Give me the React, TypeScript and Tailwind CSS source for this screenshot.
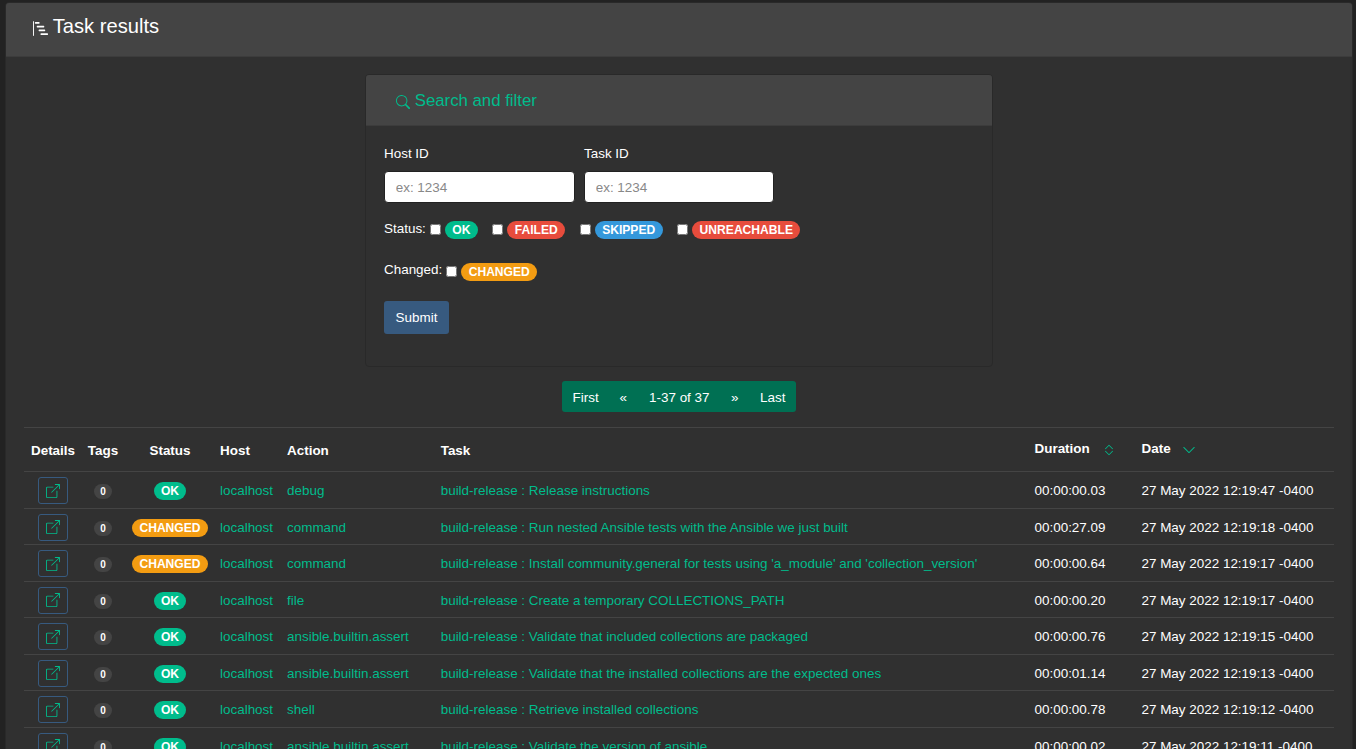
import type { ReactNode } from "react";
import {
  BsBarChartSteps,
  BsBoxArrowUpRight,
  BsChevronDown,
  BsChevronExpand,
  BsSearch,
} from "react-icons/bs";

type Status = "OK" | "CHANGED";

const rows: [Status, string, string, string, string][] = [
  ["OK", "debug", "Release instructions", "00:00:00.03", "47"],
  ["CHANGED", "command", "Run nested Ansible tests with the Ansible we just built", "00:00:27.09", "18"],
  ["CHANGED", "command", "Install community.general for tests using 'a_module' and 'collection_version'", "00:00:00.64", "17"],
  ["OK", "file", "Create a temporary COLLECTIONS_PATH", "00:00:00.20", "17"],
  ["OK", "ansible.builtin.assert", "Validate that included collections are packaged", "00:00:00.76", "15"],
  ["OK", "ansible.builtin.assert", "Validate that the installed collections are the expected ones", "00:00:01.14", "13"],
  ["OK", "shell", "Retrieve installed collections", "00:00:00.78", "12"],
  ["OK", "ansible.builtin.assert", "Validate the version of ansible", "00:00:00.02", "11"],
];

const columns =
  "grid grid-cols-[58px_42px_92px_67px_154px_594px_107px_1fr] border-t border-[#444]";

function Badge({ color, children }: { color: string; children: ReactNode }) {
  return (
    <span
      className={`inline-flex h-[18px] items-center rounded-full px-[7.4px] text-[12.1px] leading-[18px] font-bold text-white ${color}`}
    >
      {children}
    </span>
  );
}

function Option({ label, color, className }: { label: string; color: string; className: string }) {
  return (
    <label className={`flex items-center ${className}`}>
      <input type="checkbox" className="-mt-[2px] mr-[4px] h-[11px] w-[11px]" />
      <Badge color={color}>{label}</Badge>
    </label>
  );
}

function Field({ label, className }: { label: string; className: string }) {
  return (
    <label className={`block ${className}`}>
      <span className="block h-[27px] leading-[20px]">{label}</span>
      <input
        type="text"
        placeholder="ex: 1234"
        className="block h-[32px] w-full rounded-[4px] border border-[#222] bg-white px-[10.7px] text-[#303030] placeholder:text-[#888]"
      />
    </label>
  );
}

function SearchCard() {
  return (
    <section className="mx-auto mt-[17px] h-[293px] w-[628px] rounded-[4px] border border-[#292929]">
      <header className="flex h-[51px] items-center rounded-t-[3px] border-b border-[#3c3c3c] bg-[#444] pl-[30px] text-[16.8px] text-[#00bc8c]">
        <BsSearch className="mt-[3px] mr-[4.7px] h-[14px] w-[14px]" />
        <span className="mt-[1px]">Search and filter</span>
      </header>
      <div className="pt-[18px] pl-[18px]">
        <div className="flex gap-[9px]">
          <Field label="Host ID" className="w-[191px]" />
          <Field label="Task ID" className="w-[190px]" />
        </div>
        <div className="mt-[17px] flex h-[20px] items-center">
          <span className="mr-[4px] -mt-[2px]">Status:</span>
          <Option label="OK" color="bg-[#00bc8c]" className="mr-[14.6px]" />
          <Option label="FAILED" color="bg-[#e74c3c]" className="mr-[14.6px]" />
          <Option label="SKIPPED" color="bg-[#3498db]" className="mr-[14.6px]" />
          <Option label="UNREACHABLE" color="bg-[#e74c3c]" className="" />
        </div>
        <div className="mt-[22px] flex h-[20px] items-center">
          <span className="mr-[4px] -mt-[4px]">Changed:</span>
          <Option label="CHANGED" color="bg-[#f39c12]" className="" />
        </div>
        <button className="mt-[19px] h-[33px] w-[65px] rounded-[3px] bg-[#375a7f] pt-[1px] text-white">
          Submit
        </button>
      </div>
    </section>
  );
}

export default function App() {
  return (
    <div className="h-[749px] overflow-hidden bg-[#222] pt-[2px] pr-[3px] pl-[5px] font-['Liberation_Sans',Arial,sans-serif] text-[13.44px] text-white">
      <main className="h-[900px] rounded-[4px] border border-[#292929] bg-[#303030]">
        <header className="flex h-[54px] rounded-t-[3px] border-b border-[#3c3c3c] bg-[#444] pt-[8px] pl-[27px] text-[20.16px] leading-[30px]">
          <BsBarChartSteps className="mt-[10px] mr-[4.7px] h-[15px] w-[15px]" />
          Task results
        </header>
        <div className="pr-[18px] pl-[18px]">
          <SearchCard />
          <nav className="mx-auto mt-[14px] flex h-[31px] w-[234px] items-center rounded-[3px] bg-[#007053] pt-[3px] pl-[10.5px]">
            <span className="w-[47px]">First</span>
            <span className="w-[29.5px]">«</span>
            <span className="w-[82px]">1-37 of 37</span>
            <span className="w-[29px]">»</span>
            <span>Last</span>
          </nav>
          <div className="mt-[15px]">
            <div className={`${columns} h-[44px] items-center pt-[3px] font-bold`}>
              <span className="text-center">Details</span>
              <span className="text-center">Tags</span>
              <span className="text-center">Status</span>
              <span className="pl-[4px]">Host</span>
              <span className="pl-[4px]">Action</span>
              <span className="pl-[3.7px]">Task</span>
              <span className="-mt-[4px] flex items-center pl-[3.5px]">
                Duration
                <BsChevronExpand className="mt-[2px] ml-[12px] h-[14px] w-[14px] text-[#00bc8c]" />
              </span>
              <span className="-mt-[4px] flex items-center pl-[3.5px]">
                Date
                <BsChevronDown className="mt-[2px] ml-[11.4px] h-[14px] w-[14px] text-[#00bc8c]" />
              </span>
            </div>
            {rows.map(([status, action, task, duration, seconds], index) => (
              <div key={index} className={`${columns} h-[36.5px] items-center pt-[1.5px]`}>
                <button className="mx-auto flex h-[27px] w-[30px] items-center justify-center rounded-[3px] border border-[#375a7f] pt-[0.5px] text-[#00bc8c]">
                  <BsBoxArrowUpRight className="h-[14px] w-[14px]" />
                </button>
                <span className="mx-auto mt-[2.5px] flex h-[15px] w-[18px] items-center justify-center rounded-full bg-[#444] text-[10px] font-bold">
                  0
                </span>
                <span className="mt-[1.5px] flex justify-center">
                  <Badge color={status === "OK" ? "bg-[#00bc8c]" : "bg-[#f39c12]"}>{status}</Badge>
                </span>
                <a className="mt-[1.5px] pl-[4px] text-[#00bc8c]">localhost</a>
                <a className="mt-[1.5px] pl-[4px] text-[#00bc8c]">{action}</a>
                <a className="mt-[1.5px] pl-[3.7px] whitespace-nowrap text-[#00bc8c]">build-release : {task}</a>
                <span className="mt-[1.5px] pl-[3.5px]">{duration}</span>
                <span className="mt-[1.5px] pl-[3.5px] whitespace-nowrap">27 May 2022 12:19:{seconds} -0400</span>
              </div>
            ))}
          </div>
        </div>
      </main>
    </div>
  );
}
